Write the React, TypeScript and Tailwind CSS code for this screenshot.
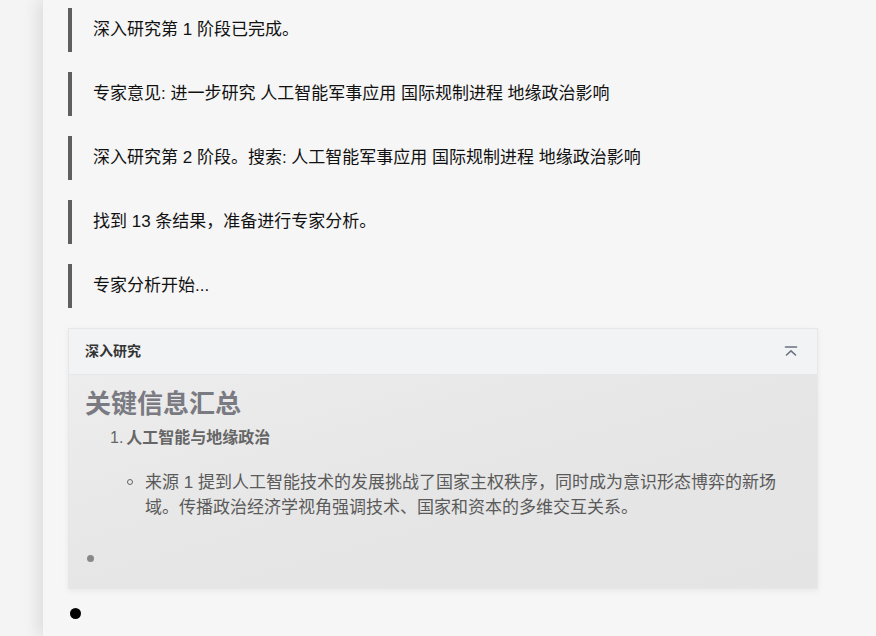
import { ReactNode } from 'react';

const logs = [
  '深入研究第 1 阶段已完成。',
  '专家意见: 进一步研究 人工智能军事应用 国际规制进程 地缘政治影响',
  '深入研究第 2 阶段。搜索: 人工智能军事应用 国际规制进程 地缘政治影响',
  '找到 13 条结果，准备进行专家分析。',
  '专家分析开始...',
];

const LogLine = ({ children }: { children: ReactNode }) => (
  <div className="border-l-4 border-[#5f5f5f] pl-[21px] py-[10px] text-[17px] leading-6 text-[#111]">
    {children}
  </div>
);

const CollapseIcon = () => (
  <svg width="16" height="16" viewBox="0 0 16 16" fill="none" stroke="#6b7280" strokeWidth="1.6" strokeLinecap="round" strokeLinejoin="round">
    <line x1="2.5" y1="3" x2="13.5" y2="3" />
    <polyline points="3.5,11 8,6.8 12.5,11" />
  </svg>
);

const App = () => {
  return (
    <div
      className="flex h-[636px] w-[876px] overflow-hidden bg-[#f4f4f4]"
      style={{ fontFamily: '"Liberation Sans", "Noto Sans CJK SC", sans-serif' }}
    >
      <div className="w-[43px] shrink-0" />
      <div className="flex-1 bg-[#f6f6f6] shadow-[-6px_0_14px_rgba(0,0,0,0.09)] pl-[25px] pr-[58px] pt-[8px]">
        <div className="flex flex-col gap-5">
          {logs.map((l, i) => (
            <LogLine key={i}>{l}</LogLine>
          ))}
        </div>

        <div className="mt-[20px] border border-[#e5e7eb] shadow-[0_2px_6px_rgba(0,0,0,0.06)]">
          <div className="flex h-[46px] items-center justify-between bg-[#f2f3f5] border-b border-[#e5e7eb] px-4">
            <span className="text-[14px] font-bold text-[#333]">深入研究</span>
            <span className="mr-[2px]"><CollapseIcon /></span>
          </div>
          <div className="bg-gradient-to-br from-[#ededed] via-[#e6e6e6] to-[#e4e4e4] px-4 pt-[13px] pb-[20px] h-[213px]">
            <h2 className="text-[26px] font-bold leading-[32px] text-[#7a7a82]">关键信息汇总</h2>
            <ol className="mt-[5px] pl-[25px]">
              <li className="text-[16px] font-bold leading-[26px] text-[#666]">
                <span className="font-normal mr-[3px]">1.</span>人工智能与地缘政治
              </li>
            </ol>
            <ul className="mt-[19px] pl-[42px] text-[17px] leading-[25px] text-[#5a5a5a]">
              <li className="relative pl-[18px]">
                <span className="absolute left-0 top-[9px] h-[6px] w-[6px] rounded-full border border-[#666]" />
                来源 1 提到人工智能技术的发展挑战了国家主权秩序，同时成为意识形态博弈的新场域。传播政治经济学视角强调技术、国家和资本的多维交互关系。
              </li>
            </ul>
            <div className="mt-[35px] ml-[2px] h-[7px] w-[7px] rounded-full bg-[#888]" />
          </div>
        </div>

        <div className="mt-[19px] ml-[2px] h-[11px] w-[11px] rounded-full bg-black" />
      </div>
    </div>
  );
};

export default App;
